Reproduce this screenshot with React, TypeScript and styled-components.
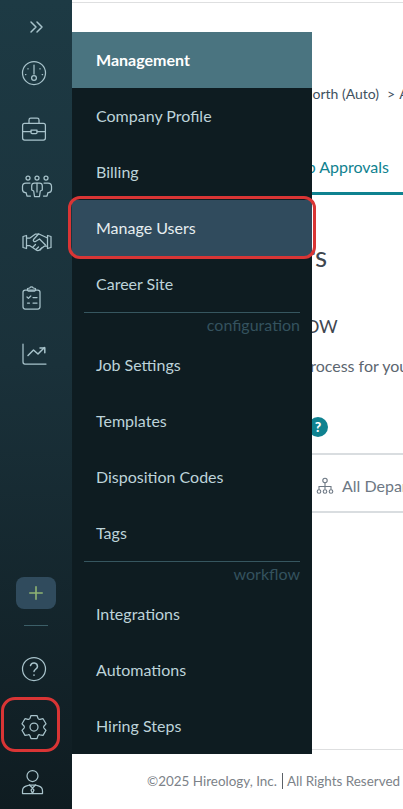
import React from "react";
import styled, { createGlobalStyle } from "styled-components";

const Global = createGlobalStyle`
  html, body { margin: 0; padding: 0; height: 100%; background: #fff; overflow: hidden; }
  * { box-sizing: border-box; }
  #root { height: 100%; font-family: Lato, "Open Sans", sans-serif; }
`;

const Shell = styled.div`
  position: relative;
  display: flex;
  width: 403px;
  height: 809px;
  overflow: hidden;
`;

const Rail = styled.nav`
  flex: 0 0 72px;
  display: flex;
  flex-direction: column;
  padding-top: 9px;
  background: linear-gradient(180deg, #1d3a44 0%, #1a313a 45%, #0f1c21 100%);
`;

const Spacer = styled.div`
  flex: 1;
`;

const Slot = styled.div<{ $h: number }>`
  position: relative;
  flex: 0 0 ${(p) => p.$h}px;
  height: ${(p) => p.$h}px;
`;

const IconSvg = styled.svg`
  display: block;
  width: 72px;
  height: 100%;
  fill: none;
  stroke: #a8c3cb;
  stroke-width: 1.25;
  stroke-linecap: round;
  stroke-linejoin: round;
`;

const AddButton = styled.button`
  align-self: flex-start;
  margin-left: 16px;
  width: 40px;
  height: 32px;
  border: 0;
  padding: 0;
  border-radius: 8px;
  background: #304b5d;
  display: flex;
  align-items: center;
  justify-content: center;
`;

const RailRule = styled.div`
  align-self: flex-start;
  margin: 16px 0 15px 24px;
  width: 24px;
  height: 1px;
  background: #3c5f68;
`;

const GearFrame = styled.div`
  position: absolute;
  left: 1px;
  top: -2px;
  width: 59px;
  height: 55px;
  border: 3.5px solid #d93535;
  border-radius: 14px;
`;

const Main = styled.main`
  flex: 1;
  min-width: 0;
  display: flex;
  flex-direction: column;
  overflow: hidden;
  padding-top: 2px;
  white-space: nowrap;
`;

const TopRule = styled.div`
  height: 1px;
  background: #dedfe0;
  flex: none;
`;

const Crumbs = styled.div`
  margin: 81px 0 0 167px;
  height: 20px;
  font-size: 14px;
  line-height: 20px;
  color: #3f5160;
`;

const CrumbSep = styled.span`
  margin: 0 4px 0 8px;
`;

const Tabs = styled.div`
  margin-top: 52px;
  height: 39px;
  padding: 1px 0 0 203px;
  border-bottom: 3px solid #0f8290;
  font-size: 16px;
  line-height: 20px;
  color: #0f8290;
`;

const Title = styled.h1`
  margin: 43px 0 0 186px;
  font-size: 28px;
  line-height: 36px;
  font-weight: 400;
  color: #3f4750;
`;

const SubTitle = styled.h2`
  margin: 40px 0 0 158px;
  font-size: 18px;
  line-height: 24px;
  font-weight: 400;
  color: #3f4750;
`;

const Lead = styled.p`
  margin: 18px 0 0 89px;
  font-size: 16px;
  line-height: 20px;
  color: #5c6670;
`;

const HelpDot = styled.div`
  margin: 41px 0 0 236px;
  width: 20px;
  height: 20px;
  border-radius: 50%;
  background: #0f8290;
  color: #fff;
  font-size: 14px;
  font-weight: 900;
  line-height: 20px;
  text-align: center;
`;

const FilterRow = styled.div`
  margin-top: 16px;
  height: 60px;
  display: flex;
  align-items: center;
  gap: 8px;
  padding: 5px 0 0 244px;
  border-top: 2px solid #d9dde0;
  border-bottom: 2px solid #d9dde0;
  font-size: 16px;
  color: #6d7884;
`;

const DeptIcon = styled.svg`
  flex: none;
  width: 18px;
  height: 18px;
  fill: none;
  stroke: #6d7884;
  stroke-width: 1.1;
`;

const Footer = styled.footer`
  margin-top: auto;
  flex: 0 0 60px;
  border-top: 1px solid #dedfe0;
  padding: 21px 0 0 75px;
  font-size: 13.45px;
  line-height: 20px;
  color: #7c8288;
`;

const FootBar = styled.span`
  display: inline-block;
  width: 1px;
  height: 16px;
  margin: 0 4px 0 5px;
  background: #5b6167;
  vertical-align: -3px;
`;

const Flyout = styled.aside`
  position: absolute;
  left: 72px;
  top: 32px;
  width: 240px;
  background: #0e1c21;
`;

const FlyoutHead = styled.div`
  height: 56px;
  padding: 0 0 2px 24px;
  display: flex;
  align-items: center;
  background: #4a7480;
  color: #fff;
  font-size: 16px;
  font-weight: 700;
`;

const Item = styled.a<{ $active?: boolean }>`
  position: relative;
  display: flex;
  align-items: center;
  height: 56px;
  padding: 0 0 2px 24px;
  font-size: 16px;
  color: ${(p) => (p.$active ? "#e6eef0" : "#bdd3d9")};
  background: ${(p) => (p.$active ? "#304b5d" : "transparent")};
`;

const ItemFrame = styled.span`
  position: absolute;
  inset: -4px -4px -3px -4px;
  border: 3.5px solid #d93535;
  border-radius: 12px;
`;

const GroupLabel = styled.div`
  margin: 0 12px;
  height: 25px;
  border-top: 1px solid #36565f;
  padding-top: 1px;
  text-align: right;
  font-size: 16px;
  line-height: 21px;
  color: #34525e;
`;

const svgBox = (top: number, h: number) => `0 ${top} 72 ${h}`;

const Glyph = ({ top, h, children }: { top: number; h: number; children: React.ReactNode }) => (
  <IconSvg viewBox={svgBox(top, h)}>{children}</IconSvg>
);

const groups = [
  { items: ["Company Profile", "Billing", "Manage Users", "Career Site"] },
  { label: "configuration", items: ["Job Settings", "Templates", "Disposition Codes", "Tags"] },
  { label: "workflow", items: ["Integrations", "Automations", "Hiring Steps"] },
];

export default function App() {
  return (
    <>
      <Global />
      <Shell>
        <Rail>
          <Slot $h={36}>
            <Glyph top={9} h={36}>
              <path d="M31 22l5 5-5 5M37 22l5 5-5 5" strokeWidth={1.5} />
            </Glyph>
          </Slot>
          <Slot $h={56}>
            <Glyph top={45} h={56}>
              <circle cx={34} cy={73} r={11.5} />
              <path d="M34 65v9" />
              <circle cx={34} cy={78} r={2.4} />
              <path d="M28 68.5v.4M40 68.5v.4M25.5 74.5h.4M42.2 74.5h.4" />
            </Glyph>
          </Slot>
          <Slot $h={56}>
            <Glyph top={101} h={56}>
              <rect x={22.6} y={123.4} width={22.8} height={16.6} rx={2} />
              <path d="M29 123v-3a1.8 1.8 0 0 1 1.8-1.8h6.4A1.8 1.8 0 0 1 39 120v3" />
              <path d="M22.6 131.5H31M37 131.5h8.4" />
              <path d="M31 130h6v2.6a1 1 0 0 1-1 1h-4a1 1 0 0 1-1-1z" />
            </Glyph>
          </Slot>
          <Slot $h={56}>
            <Glyph top={157} h={56}>
              <circle cx={28} cy={178} r={2} />
              <circle cx={37} cy={178} r={2} />
              <circle cx={46} cy={178} r={2} />
              <path d="M34.5 183h5c1.8 0 2.8 1 2.8 2.8v4.2l-2 1-.8 5.5h-5l-.8-5.5-2-1v-4.2c0-1.800 1-2.800 2.800-2.800z" />
              <path d="M37 183v9" />
              <path d="M30 183h-4c-2.500 0-3.500 1.500-3.500 3.500v3c0 1.800 1.500 3 3 3h.5l1 3.500h3.500" />
              <path d="M44 183h4c2.500 0 3.500 1.500 3.500 3.500v3c0 1.800-1.500 3-3 3H48l-1 3.500h-3.500" />
            </Glyph>
          </Slot>
          <Slot $h={56}>
            <Glyph top={213} h={56}>
              <path d="M23 236.500l3.500-1v13l-3.500-1zM51 236.500l-3.500-1v13l3.500-1z" />
              <path d="M26.500 238h3.500l5.500-4h3.500l8.500 4" />
              <path d="M47.500 246h-3l-5 4c-1 .7-2.300.7-3.200 0L29.500 245.500h-3" />
              <path d="M38.500 234l-5 5.500c-.8 1.200.8 2.600 2 2l4-2.500 6 6" />
              <path d="M33 247l2.500-2.500M36 249.500l2.500-2.500M40 250l1.500-2" />
            </Glyph>
          </Slot>
          <Slot $h={56}>
            <Glyph top={269} h={56}>
              <rect x={23} y={290} width={17} height={19} rx={2.2} />
              <path d="M27.500 290v-1.500l2.200-.5a2 2 0 0 1 3.600 0l2.200.5V290a1 1 0 0 1-.7 1h-6.600a1 1 0 0 1-.7-1z" />
              <path d="M27 297l1.400 1.400 2.400-2.400M33 297.500h4M27.500 303h2M33 303h4" />
            </Glyph>
          </Slot>
          <Slot $h={56}>
            <Glyph top={325} h={56}>
              <path d="M23 344v18a2 2 0 0 0 2 2h21" />
              <path d="M28 355.500l5.500-5.500 4.500 4 6.500-6.500" strokeWidth={1.5} />
              <path d="M40 348h4.800v4.800" strokeWidth={1.5} />
            </Glyph>
          </Slot>
          <Spacer />
          <AddButton aria-label="Add">
            <svg width={14} height={14} viewBox="0 0 14 14" fill="none" stroke="#8fb573" strokeWidth={1.6} strokeLinecap="round">
              <path d="M7 .8v12.400M.8 7h12.400" />
            </svg>
          </AddButton>
          <RailRule />
          <Slot $h={56}>
            <Glyph top={641} h={56}>
              <circle cx={34} cy={669} r={11.500} />
              <path d="M30.500 665.500a3.600 3.600 0 0 1 7 1c0 2.400-3.500 3-3.500 5" strokeWidth={1.5} />
              <path d="M34 675v.3" strokeWidth={1.6} />
            </Glyph>
          </Slot>
          <Slot $h={2} />
          <Slot $h={56}>
            <GearFrame />
            <Glyph top={699} h={56}>
              <path d="M31 715.500h6l1 2.800c.3.700 1.200 1.200 2 1l3-.6 3 5.100-2 2.200c-.5.600-.5 1.500 0 2.100l2 2.200-3 5.100-3-.6c-.8-.2-1.700.3-2 1l-1 2.800h-6l-1-2.800c-.3-.7-1.200-1.200-2-1l-3 .6-3-5.100 2-2.200c.5-.6.500-1.500 0-2.100l-2-2.200 3-5.100 3 .6c.8.2 1.700-.3 2-1z" />
              <circle cx={34} cy={727} r={4} />
            </Glyph>
          </Slot>
          <Slot $h={54}>
            <Glyph top={755} h={54}>
              <circle cx={32.500} cy={776} r={5.500} />
              <path d="M22.500 793.500v-2.500c0-2.600 1.300-4 3.500-4.800l3.500-1.200h6l3.500 1.200c2.200.8 3.500 2.200 3.500 4.800v2.500z" />
              <path d="M29.500 785l3 3 3-3M32.500 788l-1.500 2 1.500 3.500 1.500-3.500z" />
            </Glyph>
          </Slot>
        </Rail>
        <Main>
          <TopRule />
          <Crumbs>
            Hireology North (Auto)
            <CrumbSep>&gt;</CrumbSep>
            Account Settings
          </Crumbs>
          <Tabs>Setup Approvals</Tabs>
          <Title>Users</Title>
          <SubTitle>WORKFLOW</SubTitle>
          <Lead>Set up the approval process for your team</Lead>
          <HelpDot>?</HelpDot>
          <FilterRow>
            <DeptIcon viewBox="0 0 18 18">
              <circle cx={9} cy={3.500} r={2.200} />
              <circle cx={3} cy={14.500} r={1.800} />
              <circle cx={9} cy={14.500} r={1.800} />
              <circle cx={15} cy={14.500} r={1.800} />
              <path d="M9 5.700v6.800M3 12.700V9.500h12v3.200" />
            </DeptIcon>
            All Departments
          </FilterRow>
          <Footer>
            ©2025 Hireology, Inc.
            <FootBar />
            All Rights Reserved
          </Footer>
        </Main>
        <Flyout>
          <FlyoutHead>Management</FlyoutHead>
          {groups.map((g) => (
            <React.Fragment key={g.items[0]}>
              {g.label && <GroupLabel>{g.label}</GroupLabel>}
              {g.items.map((name) => (
                <Item key={name} $active={name === "Manage Users"}>
                  {name}
                  {name === "Manage Users" && <ItemFrame />}
                </Item>
              ))}
            </React.Fragment>
          ))}
        </Flyout>
      </Shell>
    </>
  );
}
